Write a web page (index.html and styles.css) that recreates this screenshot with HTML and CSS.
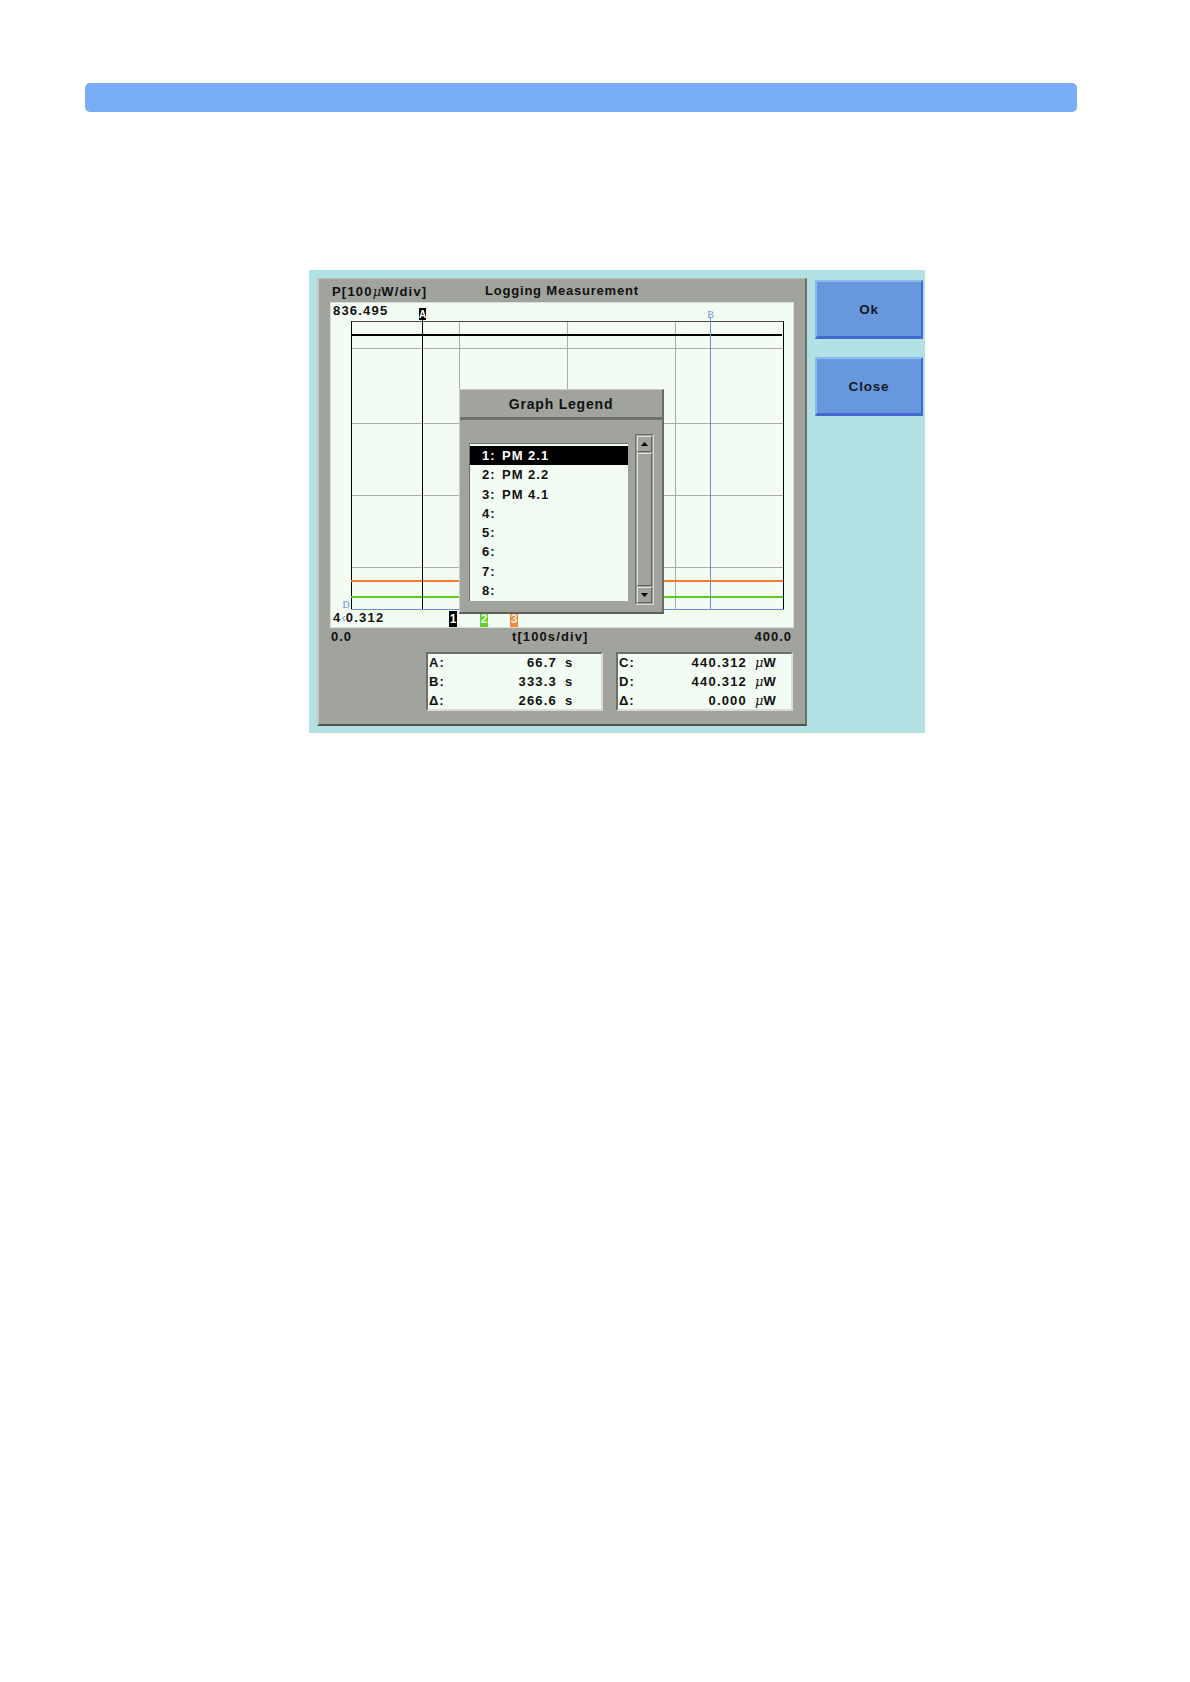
FILE: index.html
```html
<!DOCTYPE html>
<html>
<head>
<meta charset="utf-8">
<title>Logging Measurement - Graph Legend</title>
<link rel="stylesheet" href="styles.css">
</head>
<body>
<div class="topbar"></div>

<div class="shot">
  <div class="panel">
    <div class="header">
      <span class="ylabel">P[100<i class="mu">μ</i>W/div]</span>
      <span class="title">Logging Measurement</span>
    </div>

    <div class="graph">
      <svg class="plot" width="462" height="324" viewBox="0 0 462 324">
        <g stroke="#a9ada9" stroke-width="1">
          <line x1="128.5" y1="18" x2="128.5" y2="306"/>
          <line x1="236.5" y1="18" x2="236.5" y2="306"/>
          <line x1="344.5" y1="18" x2="344.5" y2="306"/>
          <line x1="20" y1="45.5" x2="452" y2="45.5"/>
          <line x1="20" y1="120.5" x2="452" y2="120.5"/>
          <line x1="20" y1="192.5" x2="452" y2="192.5"/>
          <line x1="20" y1="264.5" x2="452" y2="264.5"/>
        </g>
        <line x1="20" y1="18.5" x2="453" y2="18.5" stroke="#4a4a4a"/>
        <line x1="20.5" y1="18" x2="20.5" y2="307" stroke="#000"/>
        <line x1="452.5" y1="18" x2="452.5" y2="307" stroke="#000"/>
        <line x1="20" y1="32" x2="451" y2="32" stroke="#000" stroke-width="2"/>
        <line x1="20" y1="278" x2="452" y2="278" stroke="#f07c2a" stroke-width="2"/>
        <line x1="20" y1="294" x2="452" y2="294" stroke="#5ccd1e" stroke-width="2"/>
        <line x1="20" y1="306.5" x2="453" y2="306.5" stroke="#6b8fd6"/>
        <line x1="379.5" y1="14" x2="379.5" y2="306" stroke="#6b8fd6"/>
        <line x1="91.5" y1="14" x2="91.5" y2="306" stroke="#000"/>
        <rect x="88" y="5" width="7" height="12" fill="#000"/>
        <text x="91.5" y="14.5" class="svgmark" text-anchor="middle">A</text>
        <text x="379.5" y="15" class="svgcur" text-anchor="middle">B</text>
        <text x="15" y="305" class="svgcur" text-anchor="middle">D</text>
      </svg>
      <span class="ytop">836.495</span>
      <span class="ybot">4<span class="ov">‹</span>0.312</span>
      <span class="mk mk1">1</span>
      <span class="mk mk2">2</span>
      <span class="mk mk3">3</span>

      <div class="dialog">
        <div class="dtitle">Graph Legend</div>
        <div class="dbody">
          <ul class="list">
            <li class="sel"><span class="n">1:</span>PM 2.1</li>
            <li><span class="n">2:</span>PM 2.2</li>
            <li><span class="n">3:</span>PM 4.1</li>
            <li><span class="n">4:</span></li>
            <li><span class="n">5:</span></li>
            <li><span class="n">6:</span></li>
            <li><span class="n">7:</span></li>
            <li><span class="n">8:</span></li>
          </ul>
          <div class="scroll">
            <div class="sbtn"><svg width="9" height="6" viewBox="0 0 9 6"><path d="M4.5 1 L8 5 L1 5 Z" fill="#000"/></svg></div>
            <div class="track"></div>
            <div class="sbtn"><svg width="9" height="6" viewBox="0 0 9 6"><path d="M1 1 L8 1 L4.5 5 Z" fill="#000"/></svg></div>
          </div>
        </div>
      </div>
    </div>

    <div class="axis">
      <span class="x0">0.0</span>
      <span class="xlabel">t[100s/div]</span>
      <span class="x1">400.0</span>
    </div>

    <div class="readouts">
      <div class="box">
        <div class="row"><span>A:</span><span class="val">66.7</span><span class="unit">s</span></div>
        <div class="row"><span>B:</span><span class="val">333.3</span><span class="unit">s</span></div>
        <div class="row"><span>Δ:</span><span class="val">266.6</span><span class="unit">s</span></div>
      </div>
      <div class="box">
        <div class="row"><span>C:</span><span class="val">440.312</span><span class="unit"><i class="mu">μ</i>W</span></div>
        <div class="row"><span>D:</span><span class="val">440.312</span><span class="unit"><i class="mu">μ</i>W</span></div>
        <div class="row"><span>Δ:</span><span class="val">0.000</span><span class="unit"><i class="mu">μ</i>W</span></div>
      </div>
    </div>
  </div>

  <div class="buttons">
    <div class="btn">Ok</div>
    <div class="btn">Close</div>
  </div>
</div>
</body>
</html>
```

FILE: styles.css
```css
html, body {
  margin: 0;
  padding: 0;
  background: #ffffff;
}

body {
  width: 1190px;
  height: 1682px;
  font-family: "Liberation Sans", Arial, sans-serif;
  font-size: 13px;
  font-weight: bold;
  letter-spacing: 1px;
  color: #111;
}

.topbar {
  margin: 83px 0 0 85px;
  width: 992px;
  height: 29px;
  border-radius: 5px;
  background: #79adf6;
}

.shot {
  margin: 158px 0 0 309px;
  width: 616px;
  height: 463px;
  box-sizing: border-box;
  padding: 8px 2px 0 8px;
  background: #b1e1e3;
  display: flex;
  gap: 8px;
}

.panel {
  width: 490px;
  height: 448px;
  box-sizing: border-box;
  background: #a0a49c;
  border-left: 2px solid #c3c8c1;
  border-top: 1px solid #b9bdb6;
  border-right: 2px solid #6d706a;
  border-bottom: 2px solid #4f524d;
  display: flex;
  flex-direction: column;
}

.header {
  height: 24px;
  position: relative;
  line-height: 24px;
}

.ylabel {
  position: absolute;
  left: 13px;
  top: 1px;
  letter-spacing: 1.2px;
}

.title {
  position: absolute;
  left: 166px;
  top: 0;
  letter-spacing: 0.8px;
}

.mu {
  font-style: italic;
  font-family: "DejaVu Serif", "Liberation Serif", serif;
  font-weight: normal;
  letter-spacing: 0;
}

.graph {
  position: relative;
  margin-left: 12px;
  width: 462px;
  height: 324px;
  box-sizing: border-box;
  background: #f2fcf2;
  outline: 1px solid #d8ddd6;
}

.plot {
  position: absolute;
  left: 0;
  top: 0;
  display: block;
}

.svgmark {
  font: bold 10px "Liberation Sans", sans-serif;
  fill: #fff;
  letter-spacing: 0;
}

.svgcur {
  font: 10px "Liberation Serif", serif;
  fill: #6b8fd6;
  letter-spacing: 0;
}

.ytop {
  position: absolute;
  left: 2px;
  top: 1px;
  line-height: 14px;
  letter-spacing: 1.2px;
}

.ybot {
  position: absolute;
  left: 2px;
  top: 308px;
  line-height: 14px;
  letter-spacing: 1.2px;
}

.ybot .ov {
  color: #7d9ad8;
  font-weight: normal;
  letter-spacing: 0;
}

.mk {
  position: absolute;
  top: 308px;
  width: 8px;
  height: 16px;
  line-height: 16px;
  font-size: 12px;
  text-align: center;
  letter-spacing: 0;
  color: #fff;
}

.mk1 { left: 118px; background: #000; }
.mk2 { left: 149px; background: #6ad02c; color: #e9ffe0; }
.mk3 { left: 179px; background: #f08a38; color: #ffeedd; }

.dialog {
  position: absolute;
  left: 128px;
  top: 86px;
  width: 205px;
  height: 225px;
  box-sizing: border-box;
  background: #a0a49c;
  border-left: 1px solid #c8ccc5;
  border-top: 1px solid #c8ccc5;
  border-right: 2px solid #6a6d67;
  border-bottom: 2px solid #5e615b;
}

.dtitle {
  height: 30px;
  box-sizing: border-box;
  border-bottom: 3px solid #6f726c;
  line-height: 28px;
  text-align: center;
  font-size: 14px;
  letter-spacing: 0.8px;
}

.dbody {
  display: flex;
  align-items: flex-start;
  padding-left: 9px;
}

.list {
  list-style: none;
  margin: 23px 0 0 0;
  padding: 2px 0 0 0;
  width: 159px;
  height: 158px;
  box-sizing: border-box;
  background: #f2fcf2;
  border-top: 1px solid #6f726c;
  border-left: 1px solid #6f726c;
}

.list li {
  height: 19.3px;
  line-height: 19.3px;
  padding-left: 12px;
  white-space: nowrap;
}

.list li.sel {
  background: #000;
  color: #fff;
}

.list .n {
  display: inline-block;
  width: 20px;
}

.scroll {
  margin: 14px 0 0 7px;
  width: 19px;
  height: 171px;
  box-sizing: border-box;
  border-top: 1px solid #6c6f69;
  border-left: 1px solid #6c6f69;
  border-right: 1px solid #d5d9d2;
  border-bottom: 1px solid #d5d9d2;
  display: flex;
  flex-direction: column;
  padding: 1px;
  gap: 1px;
}

.sbtn {
  height: 16px;
  box-sizing: border-box;
  border-top: 1px solid #e0e4dd;
  border-left: 1px solid #e0e4dd;
  border-right: 1px solid #5f625c;
  border-bottom: 1px solid #5f625c;
  background: #a0a49c;
  display: flex;
  align-items: center;
  justify-content: center;
}

.track {
  flex: 1;
  box-sizing: border-box;
  border-top: 1px solid #e0e4dd;
  border-left: 1px solid #e0e4dd;
  border-right: 1px solid #5f625c;
  border-bottom: 1px solid #5f625c;
}

.axis {
  position: relative;
  height: 20px;
  margin-left: 12px;
  width: 462px;
  line-height: 20px;
}

.x0 { position: absolute; left: 0; top: 0; }
.xlabel { position: absolute; left: 181px; top: 0; letter-spacing: 1.1px; }
.x1 { position: absolute; right: 1px; top: 0; }

.readouts {
  display: flex;
  gap: 13px;
  margin: 5px 0 0 107px;
}

.box {
  width: 177px;
  height: 59px;
  box-sizing: border-box;
  background: #f2fcf2;
  border-top: 2px solid #6d706a;
  border-left: 2px solid #6d706a;
  border-right: 2px solid #d9ddd6;
  border-bottom: 2px solid #d9ddd6;
  padding-left: 1px;
}

.row {
  display: grid;
  grid-template-columns: 30px 1fr 44px;
  height: 19.2px;
  line-height: 19.2px;
}

.row:first-child {
  margin-top: -1px;
}

.row .val {
  text-align: right;
  letter-spacing: 1.2px;
}

.row .unit {
  padding-left: 8px;
}

.buttons {
  display: flex;
  flex-direction: column;
  gap: 18px;
  margin-top: 2px;
}

.btn {
  width: 108px;
  height: 59px;
  box-sizing: border-box;
  background: #6797dd;
  border-top: 2px solid #8db7f2;
  border-left: 2px solid #8db7f2;
  border-right: 2px solid #4368cf;
  border-bottom: 3px solid #4368cf;
  display: flex;
  align-items: center;
  justify-content: center;
  color: #141a24;
  font-size: 13.5px;
  letter-spacing: 0.8px;
}
```
